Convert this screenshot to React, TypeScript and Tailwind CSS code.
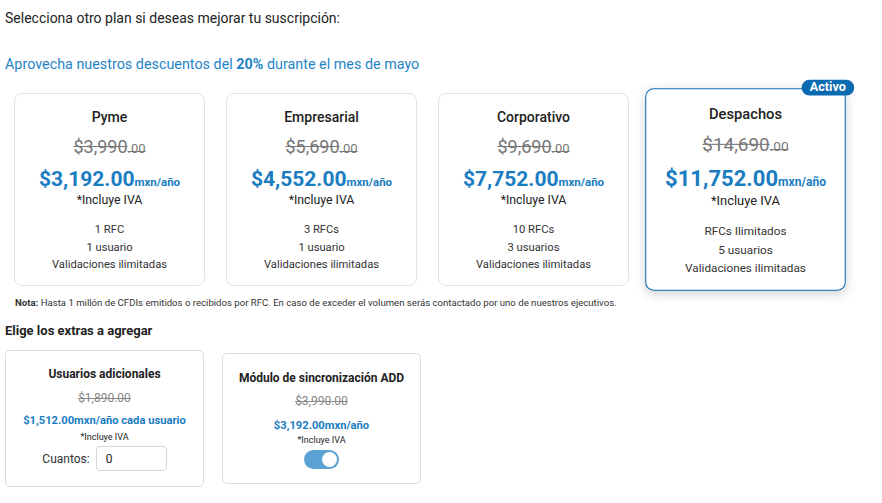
import { useState } from "react";

type Plan = {
  name: string;
  oldPrice: string;
  price: string;
  features: string[];
  active?: boolean;
};

const plans: Plan[] = [
  { name: "Pyme", oldPrice: "$3,990", price: "$3,192.00", features: ["1 RFC", "1 usuario", "Validaciones ilimitadas"] },
  { name: "Empresarial", oldPrice: "$5,690", price: "$4,552.00", features: ["3 RFCs", "1 usuario", "Validaciones ilimitadas"] },
  { name: "Corporativo", oldPrice: "$9,690", price: "$7,752.00", features: ["10 RFCs", "3 usuarios", "Validaciones ilimitadas"] },
  { name: "Despachos", oldPrice: "$14,690", price: "$11,752.00", features: ["RFCs Ilimitados", "5 usuarios", "Validaciones ilimitadas"], active: true },
];

function PlanCard({ plan }: { plan: Plan }) {
  return (
    <div
      className={
        plan.active
          ? "relative w-[191px] h-[193px] rounded-lg border border-[#0d6eb5] bg-white scale-105 shadow-[0_3px_10px_rgba(0,0,0,0.18)] flex flex-col items-center pt-[13px]"
          : "relative w-[191px] h-[193px] rounded-lg border border-[#e3e3e3] bg-white flex flex-col items-center pt-[13px]"
      }
    >
      {plan.active && (
        <span className="absolute -top-[9px] -right-[9px] rounded-full bg-[#0b6ab0] px-[8px] h-[15px] leading-[15px] text-[12px] font-bold text-white">
          Activo
        </span>
      )}
      <h3 className="text-[14px] leading-5 font-medium text-[#222]">{plan.name}</h3>
      <p className="mt-[8px] text-[18px] leading-6 text-[#777] line-through">
        {plan.oldPrice}
        <span className="text-[13px]">.00</span>
      </p>
      <p className="mt-[4px] h-[28px] flex items-baseline font-bold text-[#1a7cc1]">
        <span className="text-[21px] leading-7">{plan.price}</span>
        <span className="text-[11.5px]">mxn/año</span>
      </p>
      <p className="text-[12.3px] leading-[14px] text-[#222]">*Incluye IVA</p>
      <ul className="mt-[14px] text-[11.2px] leading-[17.5px] text-[#333] text-center">
        {plan.features.map((f) => (
          <li key={f}>{f}</li>
        ))}
      </ul>
    </div>
  );
}

export default function App() {
  const [count, setCount] = useState("0");
  const [sync, setSync] = useState(true);

  return (
    <div className="min-h-screen bg-white font-['Roboto',sans-serif] text-[#222] pl-[5px] pt-[6px]">
      <p className="text-[14px] leading-6 text-[#222]">Selecciona otro plan si deseas mejorar tu suscripción:</p>
      <p className="mt-[23px] text-[14.35px] leading-6 text-[#1f84c6]">
        Aprovecha nuestros descuentos del <span className="font-bold">20%</span> durante el mes de mayo
      </p>

      <div className="mt-[16px] ml-[9px] flex gap-[21px]">
        {plans.map((p) => (
          <PlanCard key={p.name} plan={p} />
        ))}
      </div>

      <p className="mt-[10px] ml-[10px] text-[9.6px] leading-[14px] text-[#333]">
        <span className="font-bold">Nota:</span> Hasta 1 millón de CFDIs emitidos o recibidos por RFC. En caso de exceder el
        volumen serás contactado por uno de nuestros ejecutivos.
      </p>

      <h4 className="mt-[13px] text-[13px] leading-4 font-bold text-[#222]">Elige los extras a agregar</h4>

      <div className="mt-[11px] flex items-center gap-[18px]">
        <div className="w-[199px] h-[137px] rounded-[5px] border border-[#dcdcdc] flex flex-col items-center pt-[15px]">
          <h5 className="text-[12px] leading-4 font-bold text-[#222]">Usuarios adicionales</h5>
          <p className="mt-[8px] text-[12px] leading-4 text-[#888] line-through">$1,890.00</p>
          <p className="mt-[7px] text-[11.2px] leading-4 font-bold text-[#1a7cc1]">$1,512.00mxn/año cada usuario</p>
          <p className="mt-[2px] text-[9px] leading-3 text-[#222]">*Incluye IVA</p>
          <div className="mt-[3px] flex items-center gap-[6px]">
            <label className="text-[12px] text-[#333]">Cuantos:</label>
            <input
              value={count}
              onChange={(e) => setCount(e.target.value)}
              className="w-[71px] h-[25px] rounded-[4px] border border-[#d6d6d6] px-[9px] text-[12px] text-[#222] outline-none"
            />
          </div>
        </div>

        <div className="w-[199px] h-[131px] rounded-[5px] border border-[#dcdcdc] flex flex-col items-center pt-[16px]">
          <h5 className="text-[12px] leading-4 font-bold text-[#222]">Módulo de sincronización ADD</h5>
          <p className="mt-[7px] text-[12px] leading-4 text-[#888] line-through">$3,990.00</p>
          <p className="mt-[9px] text-[11.2px] leading-4 font-bold text-[#1a7cc1]">$3,192.00mxn/año</p>
          <p className="mt-0 text-[9px] leading-3 text-[#222]">*Incluye IVA</p>
          <button
            onClick={() => setSync(!sync)}
            className={
              sync
                ? "mt-[4px] w-[35px] h-[19px] rounded-full bg-[#5aa2d3] flex items-center justify-end px-[2px]"
                : "mt-[4px] w-[35px] h-[19px] rounded-full bg-[#ccc] flex items-center justify-start px-[2px]"
            }
          >
            <span className="w-[15px] h-[15px] rounded-full bg-white" />
          </button>
        </div>
      </div>
    </div>
  );
}
